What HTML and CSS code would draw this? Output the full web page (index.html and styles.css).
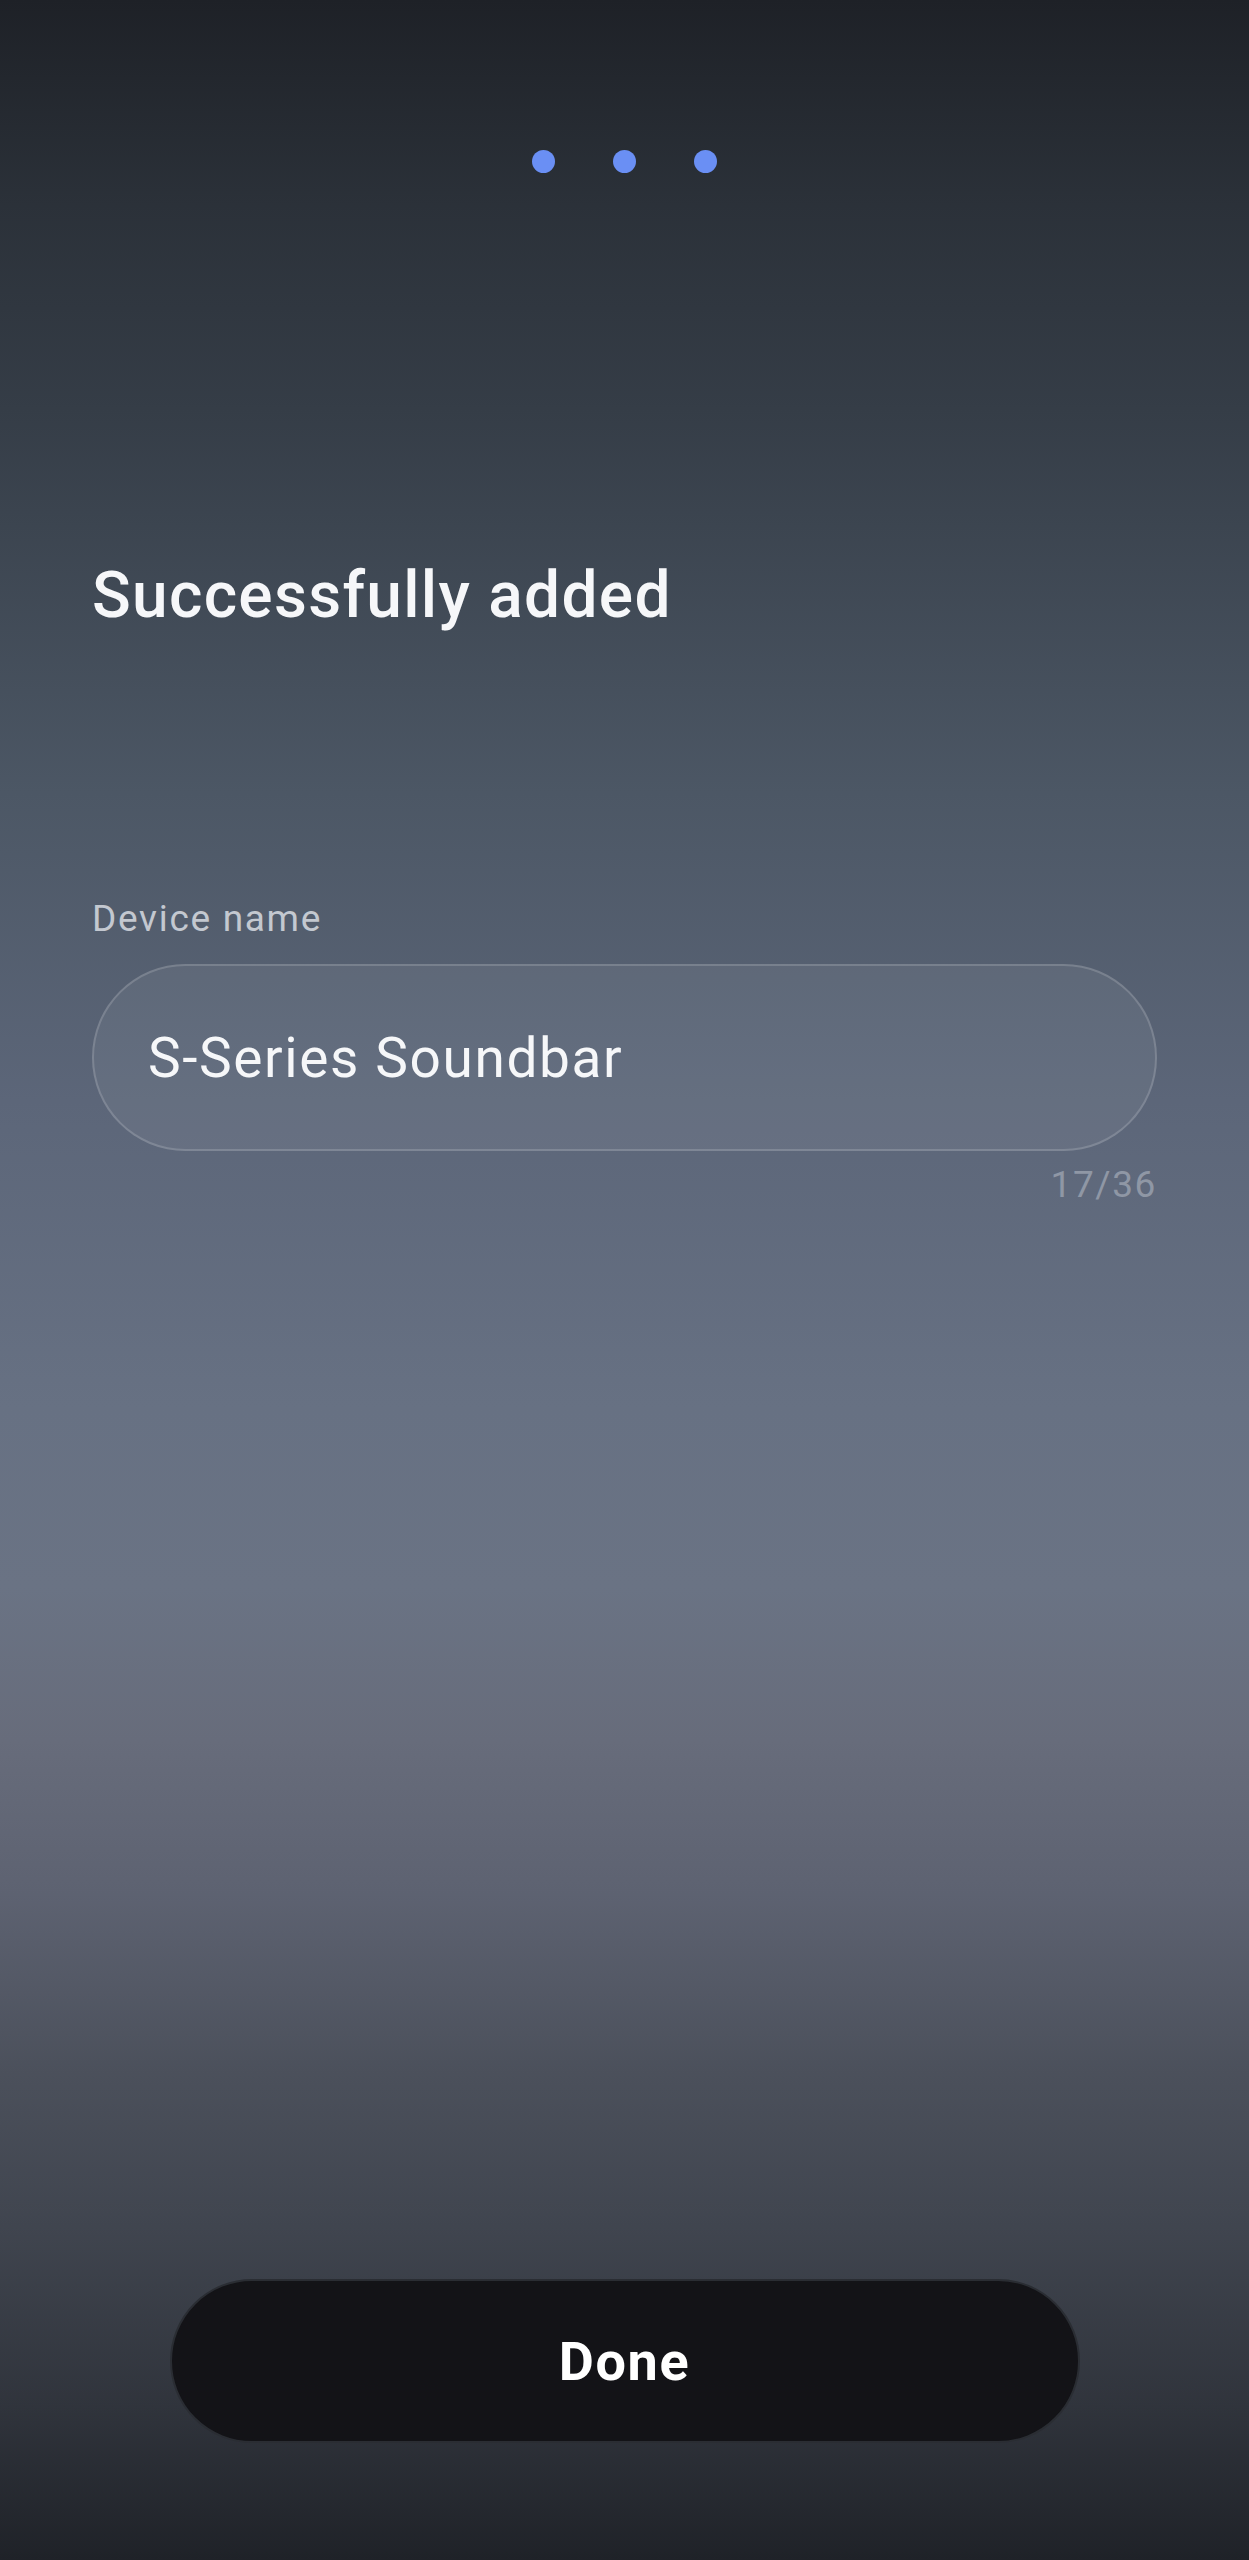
FILE: index.html
```html
<!DOCTYPE html>
<html lang="en">
<head>
    <meta charset="UTF-8">
    <meta name="viewport" content="width=device-width, initial-scale=1.0">
    <title>Add device - Done</title>
    <link rel="stylesheet" href="styles.css">
</head>
<body>
    <main class="screen">
        <!-- Шаги мастера -->
        <div class="steps">
            <span class="step-dot"></span>
            <span class="step-dot"></span>
            <span class="step-dot"></span>
        </div>

        <h1 class="title">Successfully added</h1>

        <!-- Имя устройства -->
        <section class="name-field">
            <label class="field-label" for="device-name">Device name</label>
            <div class="field-box">
                <input type="text" id="device-name" class="field-input" value="S-Series Soundbar" maxlength="36">
            </div>
            <div class="field-counter"><span id="name-count">17</span>/36</div>
        </section>

        <div class="actions">
            <button class="done-btn" type="button">Done</button>
        </div>
    </main>

    <script>
        const input = document.getElementById('device-name');
        const counter = document.getElementById('name-count');
        input.addEventListener('input', () => {
            counter.textContent = input.value.length;
        });
    </script>
</body>
</html>
```

FILE: styles.css
```css
:root {
    --accent: #6a8ff4;
    --text: #f6f7f9;
    --muted: #c3c8d0;
    --counter: #8f97a5;
    --button-bg: #131317;
}

* {
    box-sizing: border-box;
}

body {
    margin: 0;
    font-family: Roboto, 'Noto Sans', sans-serif;
    color: var(--text);
    background: #1e2127;
}

.screen {
    min-height: 2560px;
    display: flex;
    flex-direction: column;
    padding: 150px 92px 117px;
    background: linear-gradient(180deg,
        #1e2127 0%,
        #2b3139 8%,
        #353d47 16%,
        #4c5765 31%,
        #5c6679 43%,
        #677183 55%,
        #6a7384 62%,
        #676c7b 68%,
        #5d6271 74%,
        #4b505b 81%,
        #40454f 87%,
        #30343c 94%,
        #1f2228 100%);
}

/* Точки шагов */
.steps {
    display: flex;
    justify-content: center;
    gap: 58px;
}

.step-dot {
    width: 23px;
    height: 23px;
    border-radius: 50%;
    background: var(--accent);
}

.title {
    margin: 385px 0 0;
    font-size: 64px;
    font-weight: 500;
    line-height: 1.2;
    letter-spacing: 1.3px;
}

/* Поле имени */
.name-field {
    margin-top: 262px;
    display: flex;
    flex-direction: column;
}

.field-label {
    font-size: 37px;
    line-height: 1.2;
    letter-spacing: 1.7px;
    color: var(--muted);
}

.field-box {
    margin-top: 23px;
    height: 187px;
    border-radius: 94px;
    border: 2px solid rgba(255, 255, 255, 0.16);
    background: rgba(255, 255, 255, 0.06);
    display: flex;
    align-items: center;
    padding: 0 54px;
}

.field-input {
    width: 100%;
    background: none;
    border: none;
    outline: none;
    padding: 0;
    font-family: inherit;
    font-size: 55px;
    letter-spacing: 1.6px;
    color: var(--text);
}

.field-counter {
    margin-top: 12px;
    text-align: right;
    font-size: 37px;
    line-height: 1.2;
    letter-spacing: 1.6px;
    color: var(--counter);
}

/* Кнопка */
.actions {
    margin-top: auto;
    display: flex;
    justify-content: center;
}

.done-btn {
    width: 910px;
    height: 164px;
    border-radius: 82px;
    border: 2px solid #2a2d33;
    background: var(--button-bg);
    color: #ffffff;
    font-family: inherit;
    font-size: 54px;
    font-weight: 700;
    letter-spacing: 1.6px;
    cursor: pointer;
}
```
